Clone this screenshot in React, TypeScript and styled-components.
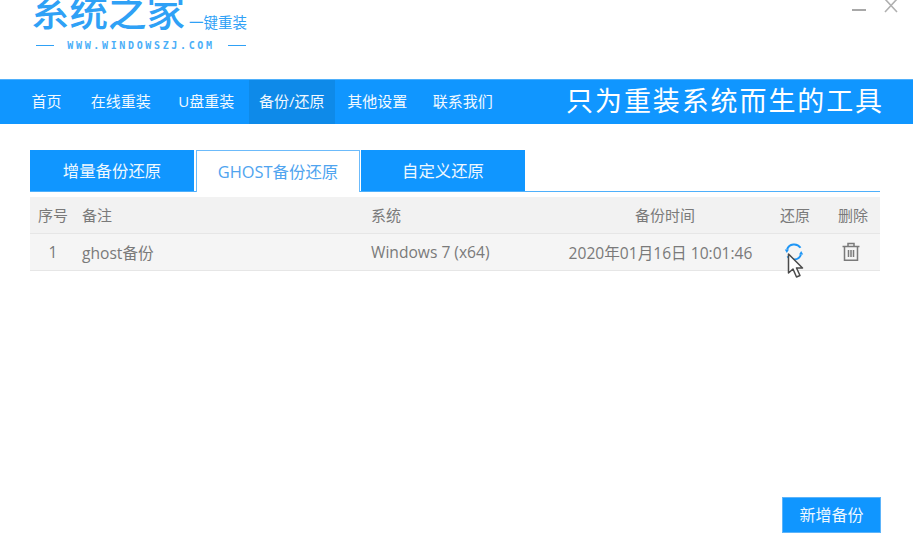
import React from "react";
import styled, { createGlobalStyle } from "styled-components";

const CJK = `"Open Sans", "Noto Sans CJK SC", "Noto Sans", sans-serif`;

const Global = createGlobalStyle`
  html, body { margin: 0; padding: 0; background: #fff; }
  body { font-family: ${CJK}; overflow: hidden; }
  * { box-sizing: border-box; }
`;

const Page = styled.div`
  width: 913px;
  height: 557px;
  display: flex;
  flex-direction: column;
  overflow: hidden;
`;

const Header = styled.header`
  height: 79px;
  display: flex;
  justify-content: space-between;
  align-items: flex-start;
  padding: 0 14px 0 31px;
  overflow: hidden;
`;

const Logo = styled.div`
  display: flex;
  flex-direction: column;
  color: #2fa1f6;
`;

const LogoTop = styled.div`
  display: flex;
  align-items: flex-end;
  height: 32px;
`;

const LogoTitle = styled.span`
  font-size: 38.5px;
  line-height: 37px;
  font-weight: 500;
  margin-top: -8px;
  margin-bottom: 2px;
  white-space: nowrap;
`;

const LogoSub = styled.span`
  font-size: 14.5px;
  line-height: 16px;
  margin-left: 4px;
  margin-bottom: 1px;
  white-space: nowrap;
`;

const LogoUrlRow = styled.div`
  display: flex;
  align-items: center;
  margin: 5px 0 0 5px;
  height: 16px;
`;

const LogoRule = styled.span`
  width: 18px;
  height: 1px;
  background: #2fa1f6;
`;

const LogoUrl = styled.span`
  width: 174px;
  text-align: center;
  font-family: "DejaVu Sans Mono", monospace;
  font-size: 10px;
  font-weight: 700;
  letter-spacing: 2.65px;
  color: #4aaef8;
`;

const WindowControls = styled.div`
  display: flex;
  align-items: flex-start;
  gap: 17px;
`;

const NavBar = styled.nav`
  height: 45px;
  background: #1096ff;
  border-top: 1px solid #4fb0fb;
  display: flex;
  align-items: stretch;
  padding-left: 15px;
`;

const NavItem = styled.div<{ $active?: boolean; $narrow?: boolean }>`
  width: ${(p) => (p.$narrow ? 63 : 85.5)}px;
  display: flex;
  align-items: center;
  justify-content: center;
  padding-bottom: 3px;
  background: ${(p) => (p.$active ? "#0e8ae9" : "transparent")};
  color: #f2f9ff;
  font-size: 15px;
  white-space: nowrap;
`;

const Slogan = styled.div`
  margin-left: auto;
  margin-right: 29px;
  align-self: center;
  margin-bottom: 3px;
  color: #fff;
  font-size: 27px;
  letter-spacing: 1.9px;
  line-height: 36px;
  white-space: nowrap;
`;

const Content = styled.main`
  flex: 1;
  display: flex;
  flex-direction: column;
  padding: 26px 33px 24px 30px;
`;

const Tabs = styled.div`
  display: flex;
  height: 42px;
  border-bottom: 1px solid #4fb0fb;
`;

const Tab = styled.div<{ $active?: boolean; $w: number }>`
  width: ${(p) => p.$w}px;
  height: ${(p) => (p.$active ? 42 : 41)}px;
  display: flex;
  align-items: center;
  justify-content: center;
  padding-bottom: 2px;
  font-size: 16.4px;
  white-space: nowrap;
  margin-right: ${(p) => (p.$active ? 1 : 2)}px;
  background: ${(p) => (p.$active ? "#fff" : "#1096ff")};
  color: ${(p) => (p.$active ? "#4fa4ef" : "#eef8ff")};
  border: 1px solid ${(p) => (p.$active ? "#6cbbfb" : "#1096ff")};
  border-bottom: ${(p) => (p.$active ? "none" : undefined)};
`;

const Table = styled.div`
  margin-top: 5px;
  display: flex;
  flex-direction: column;
`;

const TableRow = styled.div<{ $head?: boolean }>`
  display: grid;
  grid-template-columns: 46px 6px 289px 184px 220px 40px 65px;
  height: 37px;
  align-items: center;
  background: ${(p) => (p.$head ? "#f2f2f2" : "#f5f5f5")};
  border-bottom: 1px solid #e6e6e6;
  color: #7a7a7a;
  font-size: ${(p) => (p.$head ? 15 : 15.6)}px;
  white-space: nowrap;
`;

const Cell = styled.div<{ $col: number; $center?: boolean; $right?: number; $left?: number }>`
  grid-column: ${(p) => p.$col};
  text-align: ${(p) => (p.$center ? "center" : "left")};
  padding-right: ${(p) => p.$right ?? 0}px;
  padding-left: ${(p) => p.$left ?? 0}px;
  padding-bottom: 2px;
  position: relative;
`;

const DataCell = styled(Cell)`
  padding-bottom: 0;
`;

const IconCell = styled(Cell)`
  display: flex;
  justify-content: center;
  height: 36px;
  align-items: center;
  padding-bottom: 0;
`;

const Cursor = styled.svg`
  position: absolute;
  left: 12px;
  top: 19px;
`;

const Footer = styled.div`
  margin-top: auto;
  display: flex;
  justify-content: flex-end;
`;

const AddButton = styled.button`
  width: 99px;
  height: 36px;
  margin-right: -1px;
  background: #1096ff;
  border: 1px solid #5db4fa;
  color: #eef8ff;
  font-family: ${CJK};
  font-size: 16px;
  padding: 0 0 2px;
`;

export default function App() {
  return (
    <Page>
      <Global />
      <Header>
        <Logo>
          <LogoTop>
            <LogoTitle>系统之家</LogoTitle>
            <LogoSub>一键重装</LogoSub>
          </LogoTop>
          <LogoUrlRow>
            <LogoRule />
            <LogoUrl>WWW.WINDOWSZJ.COM</LogoUrl>
            <LogoRule />
          </LogoUrlRow>
        </Logo>
        <WindowControls>
          <svg width="14" height="14" viewBox="0 0 14 14">
            <rect x="0" y="9" width="14" height="2" fill="#a8a8a8" />
          </svg>
          <svg width="16" height="14" viewBox="0 0 16 14">
            <path d="M2 -1 L14 12 M14 -1 L2 12" stroke="#b0b0b0" strokeWidth="1.6" fill="none" />
          </svg>
        </WindowControls>
      </Header>
      <NavBar>
        <NavItem $narrow>首页</NavItem>
        <NavItem>在线重装</NavItem>
        <NavItem>U盘重装</NavItem>
        <NavItem $active>备份/还原</NavItem>
        <NavItem>其他设置</NavItem>
        <NavItem>联系我们</NavItem>
        <Slogan>只为重装系统而生的工具</Slogan>
      </NavBar>
      <Content>
        <Tabs>
          <Tab $w={164}>增量备份还原</Tab>
          <Tab $w={164} $active>GHOST备份还原</Tab>
          <Tab $w={164}>自定义还原</Tab>
        </Tabs>
        <Table>
          <TableRow $head>
            <Cell $col={1} $center>序号</Cell>
            <Cell $col={3}>备注</Cell>
            <Cell $col={4}>系统</Cell>
            <Cell $col={5} $center>备份时间</Cell>
            <Cell $col={6} $center>还原</Cell>
            <Cell $col={7} $center $left={11}>删除</Cell>
          </TableRow>
          <TableRow>
            <DataCell $col={1} $center>1</DataCell>
            <DataCell $col={3}>ghost备份</DataCell>
            <DataCell $col={4}>Windows 7 (x64)</DataCell>
            <DataCell $col={5} $center $right={9}>2020年01月16日 10:01:46</DataCell>
            <IconCell $col={6} $right={2}>
              <svg width="20" height="20" viewBox="0 0 20 20" fill="none">
                <path d="M3 7.5 A7.6 7.6 0 0 1 16.5 5.8" stroke="#1f96f5" strokeWidth="2" />
                <path d="M17 12.5 A7.6 7.6 0 0 1 3.5 14.2" stroke="#1f96f5" strokeWidth="2" />
                <path d="M0.8 7.5 L5 7.5 L2.8 11 Z" fill="#1f96f5" />
                <path d="M19.2 12.5 L15 12.5 L17.2 9 Z" fill="#1f96f5" />
              </svg>
              <Cursor width="18" height="26" viewBox="0 0 18 26">
                <path
                  d="M1.5 1 L1.5 20 L6 16 L9.5 24 L13 22.5 L9.5 15 L15.5 15 Z"
                  fill="#fff"
                  stroke="#4a4a4a"
                  strokeWidth="1.5"
                  strokeLinejoin="round"
                />
              </Cursor>
            </IconCell>
            <IconCell $col={7} $left={7}>
              <svg width="18" height="20" viewBox="0 0 18 20" fill="none" stroke="#7a7a7a" strokeWidth="1.5">
                <path d="M0.5 4.5 H17.5" />
                <path d="M6 4.5 V1.5 H12 V4.5" />
                <path d="M2.5 4.5 V18.2 H15.5 V4.5" />
                <path d="M6.5 8 V15 M9 8 V15 M11.5 8 V15" />
              </svg>
            </IconCell>
          </TableRow>
        </Table>
        <Footer>
          <AddButton>新增备份</AddButton>
        </Footer>
      </Content>
    </Page>
  );
}
